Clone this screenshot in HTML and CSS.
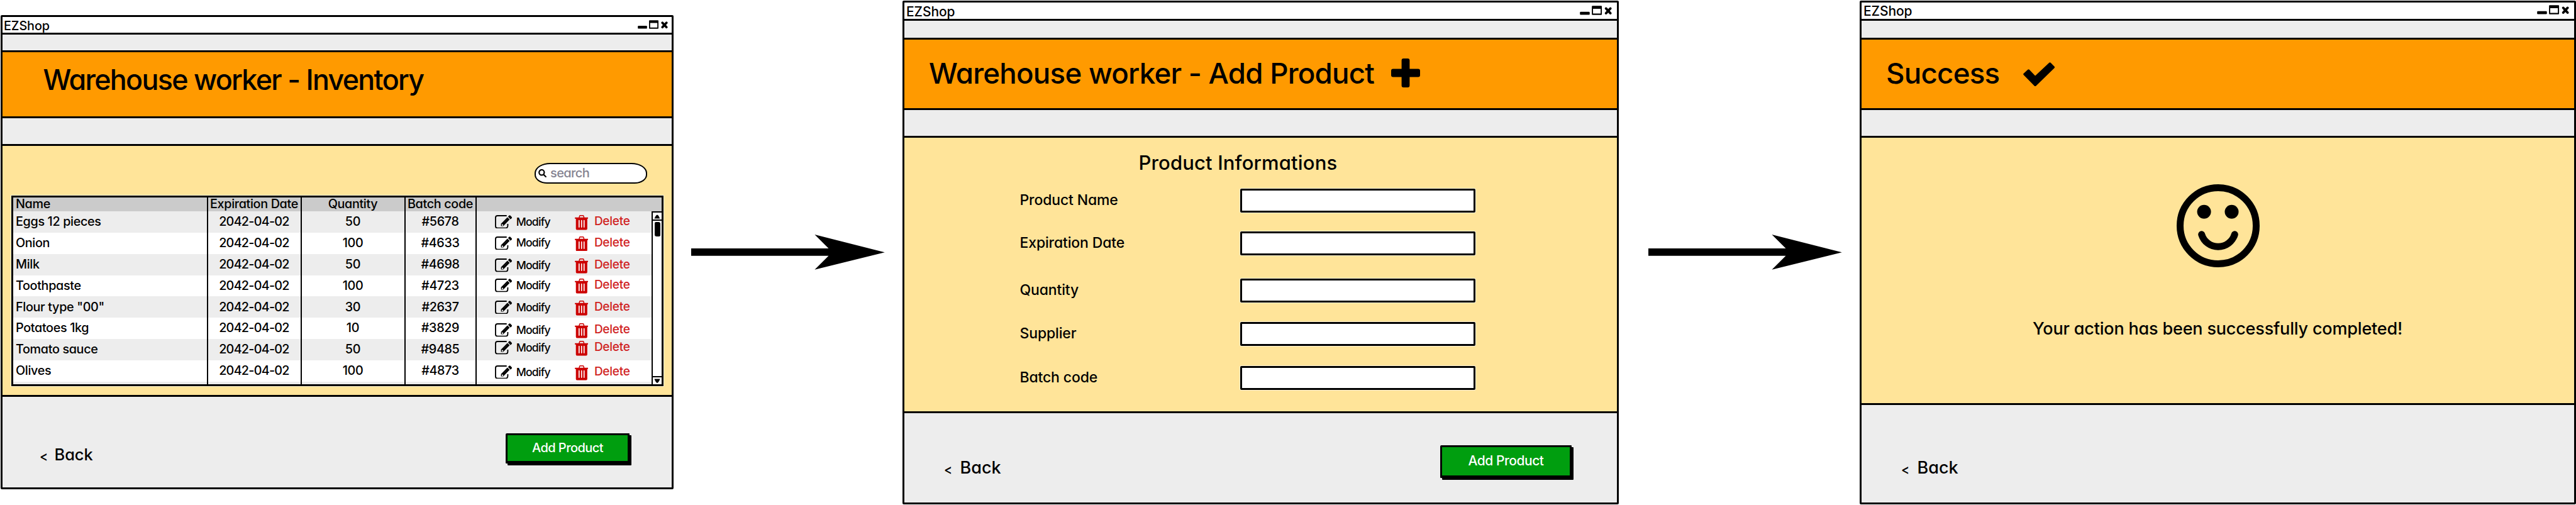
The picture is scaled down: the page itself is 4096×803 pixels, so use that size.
FILE: index.html
```html
<!DOCTYPE html>
<html lang="en">
<head>
<meta charset="utf-8">
<title>EZShop</title>
<link rel="stylesheet" href="styles.css">
</head>
<body>
<svg class="sprite" xmlns="http://www.w3.org/2000/svg">
  <symbol id="controls" viewBox="0 0 48 14">
    <rect x="0.2" y="9" width="14.6" height="4.6" rx="1.2"/>
    <path fill-rule="evenodd" d="M19 .2h13a1 1 0 0 1 1 1v11.600a1 1 0 0 1-1 1h-13a1 1 0 0 1-1-1v-11.600a1 1 0 0 1 1-1zM19.800 4.600v7.200h11.400v-7.200z"/>
    <path d="M39.300 4.200l6.400 7M45.700 4.200l-6.400 7" fill="none" stroke="#000" stroke-width="3.700" stroke-linecap="round"/>
  </symbol>
  <symbol id="edit" viewBox="0 0 144 114">
    <path d="M99 5H22Q5 5 5 22V92Q5 109 22 109H90Q108 109 108 90V74" fill="none" stroke="#000" stroke-width="10"/>
    <path d="M51 72L105 19L124 37L70 92H51z"/>
    <path d="M110 13L119 4Q125 -1 131 5L140 14Q147 21 141 26L131 35z"/>
    <path d="M58 80l5-6 3 6 6 3-6 5-7 2z" fill="#fff"/>
    <path d="M77 62l26-26" stroke="#777" stroke-width="2"/>
  </symbol>
  <symbol id="trash" viewBox="0 0 114 126">
    <path d="M36 24L41 6Q42 4 45 4H69Q72 4 73 6L78 24" fill="none" stroke="#c00" stroke-width="8"/>
    <rect x="0" y="20" width="114" height="11" rx="3" fill="#c00"/>
    <path d="M9 26H105V114Q105 126 94 126H20Q9 126 9 114z" fill="#c00"/>
    <path d="M36 45V101M57 45V101M78 45V101" stroke="#fff" stroke-width="9" stroke-linecap="round"/>
  </symbol>
  <symbol id="arrow" viewBox="0 0 308 56">
    <path d="M0 22H218.500L196.400 0L307.800 28.200L196.400 55.800L218.500 33.800H0z"/>
  </symbol>
</svg>

<main class="flow">
  <section class="window window-inventory">
    <div class="titlebar"><span class="app">EZShop</span><svg class="controls"><use href="#controls"/></svg></div>
    <div class="toolbar"></div>
    <header class="header"><h1 class="title">Warehouse worker - Inventory</h1></header>
    <div class="strip"></div>
    <div class="content">
      <div class="search">
        <svg class="search-icon" viewBox="0 0 13 13"><ellipse cx="5.300" cy="5.200" rx="4.100" ry="4.200"/><path d="M8.300 8.500L11.800 12"/></svg>
        <span class="search-text">search</span>
      </div>
      <div class="table">
        <div class="row head"><div class="cell name">Name</div><div class="cell">Expiration Date</div><div class="cell">Quantity</div><div class="cell">Batch code</div><div class="cell"></div></div>
        <div class="table-body">
          <div class="rows">
            <div class="row"><div class="cell name">Eggs 12 pieces</div><div class="cell date">2042-04-02</div><div class="cell">50</div><div class="cell">#5678</div><div class="actions"><svg class="edit"><use href="#edit"/></svg><span class="modify">Modify</span><svg class="trash"><use href="#trash"/></svg><span class="delete">Delete</span></div></div>
            <div class="row"><div class="cell name">Onion</div><div class="cell date">2042-04-02</div><div class="cell">100</div><div class="cell">#4633</div><div class="actions"><svg class="edit"><use href="#edit"/></svg><span class="modify">Modify</span><svg class="trash"><use href="#trash"/></svg><span class="delete">Delete</span></div></div>
            <div class="row"><div class="cell name">Milk</div><div class="cell date">2042-04-02</div><div class="cell">50</div><div class="cell">#4698</div><div class="actions"><svg class="edit"><use href="#edit"/></svg><span class="modify">Modify</span><svg class="trash"><use href="#trash"/></svg><span class="delete">Delete</span></div></div>
            <div class="row"><div class="cell name">Toothpaste</div><div class="cell date">2042-04-02</div><div class="cell">100</div><div class="cell">#4723</div><div class="actions"><svg class="edit"><use href="#edit"/></svg><span class="modify">Modify</span><svg class="trash"><use href="#trash"/></svg><span class="delete">Delete</span></div></div>
            <div class="row"><div class="cell name">Flour type "00"</div><div class="cell date">2042-04-02</div><div class="cell">30</div><div class="cell">#2637</div><div class="actions"><svg class="edit"><use href="#edit"/></svg><span class="modify">Modify</span><svg class="trash"><use href="#trash"/></svg><span class="delete">Delete</span></div></div>
            <div class="row"><div class="cell name">Potatoes 1kg</div><div class="cell date">2042-04-02</div><div class="cell">10</div><div class="cell">#3829</div><div class="actions"><svg class="edit"><use href="#edit"/></svg><span class="modify">Modify</span><svg class="trash"><use href="#trash"/></svg><span class="delete">Delete</span></div></div>
            <div class="row"><div class="cell name">Tomato sauce</div><div class="cell date">2042-04-02</div><div class="cell">50</div><div class="cell">#9485</div><div class="actions"><svg class="edit"><use href="#edit"/></svg><span class="modify">Modify</span><svg class="trash"><use href="#trash"/></svg><span class="delete">Delete</span></div></div>
            <div class="row"><div class="cell name">Olives</div><div class="cell date">2042-04-02</div><div class="cell">100</div><div class="cell">#4873</div><div class="actions"><svg class="edit"><use href="#edit"/></svg><span class="modify">Modify</span><svg class="trash"><use href="#trash"/></svg><span class="delete">Delete</span></div></div>
            <div class="row rest"><div class="cell"></div><div class="cell"></div><div class="cell"></div><div class="cell"></div><div></div></div>
          </div>
          <div class="scrollbar">
            <svg class="scroll-up" viewBox="0 0 14 11"><path d="M2.500 9.500Q5 3.500 7 3.500T11.200 9.500z"/></svg>
            <div class="thumb"></div>
            <svg class="scroll-down" viewBox="0 0 14 11"><path d="M2.500 2.500H11.500Q9 9 7 9T2.500 2.500z"/></svg>
          </div>
        </div>
      </div>
    </div>
    <footer class="footer"><a class="back"><span class="lt">&lt;</span><span class="back-text">Back</span></a><button class="button">Add Product</button></footer>
  </section>

  <svg class="arrow arrow-first"><use href="#arrow"/></svg>

  <section class="window window-form">
    <div class="titlebar"><span class="app">EZShop</span><svg class="controls"><use href="#controls"/></svg></div>
    <div class="toolbar"></div>
    <header class="header"><h1 class="title">Warehouse worker - Add Product</h1><svg class="plus" viewBox="0 0 46 46"><rect x="0" y="16.600" width="46" height="12.800" rx="3"/><rect x="16.600" y="0" width="12.800" height="46" rx="3"/></svg></header>
    <div class="strip"></div>
    <div class="content">
      <h2 class="subtitle">Product Informations</h2>
      <form class="form">
        <label class="field"><span class="label">Product Name</span><input class="input"></label>
        <label class="field"><span class="label">Expiration Date</span><input class="input"></label>
        <label class="field"><span class="label">Quantity</span><input class="input"></label>
        <label class="field"><span class="label">Supplier</span><input class="input"></label>
        <label class="field"><span class="label">Batch code</span><input class="input"></label>
      </form>
    </div>
    <footer class="footer"><a class="back"><span class="lt">&lt;</span><span class="back-text">Back</span></a><button class="button">Add Product</button></footer>
  </section>

  <svg class="arrow arrow-second"><use href="#arrow"/></svg>

  <section class="window window-success">
    <div class="titlebar"><span class="app">EZShop</span><svg class="controls"><use href="#controls"/></svg></div>
    <div class="toolbar"></div>
    <header class="header"><h1 class="title">Success</h1><svg class="check" viewBox="0 0 50.300 38.400"><path d="M2 19L8.500 13L19 24L42.500 2L48.300 8L19 36.400z"/></svg></header>
    <div class="strip"></div>
    <div class="content">
      <svg class="smiley" viewBox="0 0 132 132"><circle class="line" cx="66" cy="66" r="60.500"/><circle cx="43.600" cy="43.700" r="11"/><circle cx="87.500" cy="43.700" r="11"/><path class="line" d="M39.700 79.800A27.500 27.500 0 0 0 92.300 79.800"/></svg>
      <p class="message">Your action has been successfully completed!</p>
    </div>
    <footer class="footer"><a class="back"><span class="lt">&lt;</span><span class="back-text">Back</span></a></footer>
  </section>
</main>
</body>
</html>
```
FILE: styles.css
```css
* { box-sizing: border-box; }

body {
  margin: 0;
  background: #fff;
  color: #000;
  font-family: Inter, "Noto Sans", sans-serif;
  font-weight: 500;
  font-feature-settings: "cv11";
}

h1, h2, p { margin: 0; }

.sprite { display: block; width: 0; height: 0; }

.flow {
  display: flex;
  align-items: flex-start;
  width: 4096px;
  height: 803px;
  overflow: hidden;
}

/* Window frame */
.window {
  display: flex;
  flex-direction: column;
  flex: none;
  width: 1139px;
  margin-top: 1px;
  border: 3px solid #000;
  border-radius: 2px;
  background: #ededed;
}
.titlebar {
  display: flex;
  align-items: center;
  justify-content: space-between;
  height: 29px;
  padding: 3px 8px 0 3px;
  border-bottom: 3px solid #000;
  background: #fff;
}
.app { font-size: 21px; line-height: 24px; letter-spacing: -0.1px; }
.controls { width: 51px; height: 15px; margin-top: -5px; }
.toolbar { height: 30px; border-bottom: 3px solid #000; }
.header {
  display: flex;
  align-items: center;
  height: 112px;
  padding-bottom: 2px;
  padding-left: 39px;
  border-bottom: 3px solid #000;
  background: #ff9a00;
}
.title {
  font-size: 45.700px;
  font-weight: 550;
  line-height: 54px;
  letter-spacing: -0.770px;
  white-space: nowrap;
}
.strip { height: 44px; border-bottom: 3px solid #000; }
.content { height: 438px; border-bottom: 3px solid #000; background: #ffe499; }
.footer {
  display: flex;
  align-items: flex-start;
  justify-content: space-between;
  height: 142px;
}
.back {
  display: flex;
  margin-top: 72px;
  padding-left: 63px;
  font-size: 27px;
  line-height: 30px;
}
.lt {
  width: 25.500px;
  padding-top: 2px;
  font-size: 22px;
  transform: scaleX(0.900);
  transform-origin: 0 50%;
}
.button {
  width: 209px;
  height: 52px;
  margin: 50.500px 72px 0 0;
  padding: 0 0 2px;
  border: 3px solid #000;
  border-bottom-width: 4px;
  border-radius: 2px 1px 1px;
  background: #009e0f;
  box-shadow: 3px 3px 0 #000;
  color: #fff;
  font: inherit;
  font-size: 21px;
  letter-spacing: -0.450px;
}

/* Inventory window */
.window-inventory { width: 1070px; margin: 24px 0 0 1px; }
.window-inventory .titlebar { height: 28px; padding: 3px 6px 0 2px; }
.window-inventory .app { font-size: 19.800px; }
.window-inventory .controls { width: 48px; height: 14px; margin-top: -5px; }
.window-inventory .toolbar { height: 28px; }
.window-inventory .header { height: 105px; padding: 0 0 15px 64.500px; }
.window-inventory .title { font-size: 44.800px; letter-spacing: -1.700px; }
.window-inventory .content { height: 399px; padding: 27px 13px 0 14px; }
.window-inventory .footer { height: 144px; }
.window-inventory .back { margin-top: 77px; padding-left: 59px; font-size: 25.400px; }
.window-inventory .lt { width: 23.500px; }
.window-inventory .button {
  width: 197px;
  height: 48px;
  margin: 58px 67px 0 0;
  font-size: 20px;
  letter-spacing: -0.550px;
}

.search {
  display: flex;
  align-items: center;
  width: 179px;
  height: 33px;
  margin-left: 832px;
  padding-left: 4px;
  border: 2.500px solid #000;
  border-radius: 25px 25px 20px 20px / 16px 16px 14px 14px;
  background: #fff;
}
.search-icon {
  width: 13px;
  height: 13px;
  fill: none;
  stroke: #000;
  stroke-width: 2.200px;
  stroke-linecap: round;
}
.search-text {
  margin-left: 6px;
  padding-bottom: 2px;
  color: #858391;
  font-size: 20px;
  letter-spacing: -0.600px;
}

.table {
  width: 1037px;
  height: 303px;
  margin-top: 19px;
  border: 3px solid #000;
  background: #fff;
  box-shadow: 0 0 0 1px rgba(255, 255, 255, 0.6);
  font-size: 19.800px;
  letter-spacing: -0.350px;
}
.table-body { display: flex; height: 275px; }
.rows { width: 1015px; height: 275px; overflow: hidden; }
.row {
  display: grid;
  grid-template-columns: 309.500px 149px 165px 113px 1fr;
  height: 33.850px;
}
.row:nth-child(odd) { background: #ededed; }
.row.head { height: 22px; background: #cbcbcb; }
.row.rest { height: 4.200px; }
.cell {
  display: flex;
  align-items: center;
  justify-content: center;
  padding-bottom: 1.500px;
  border-right: 2px solid #000;
  line-height: 20px;
  white-space: nowrap;
}
.head .cell { padding-bottom: 3px; }
.head .cell:last-child { border-right: 0; }
.cell.name { justify-content: flex-start; padding-left: 4px; }
.cell.date { letter-spacing: -0.750px; }

.actions { display: flex; align-items: flex-start; padding: 5.800px 0 0 29px; line-height: 20px; }
.row:nth-child(3) .actions { padding-top: 7.500px; }
.row:nth-child(5) .actions { padding-top: 6.500px; }
.row:nth-child(6) .actions { padding-top: 8.800px; }
.row:nth-child(7) .actions { padding-top: 3.200px; }
.row:nth-child(8) .actions { padding-top: 7.800px; }
.edit { width: 27.200px; height: 21.600px; }
.modify {
  width: 93px;
  margin: 0.800px 0 0 7px;
  font-size: 17.600px;
  letter-spacing: -0.750px;
}
.trash { width: 21.500px; height: 23.800px; }
.delete {
  margin-left: 9.700px;
  color: #d02222;
  font-size: 19px;
  letter-spacing: -0.250px;
}

.scrollbar {
  display: flex;
  flex-direction: column;
  width: 16px;
  height: 275px;
  border: solid #000;
  border-width: 2px 0 0 2px;
  background: #fff;
}
.scroll-up { width: 14px; height: 13px; border-bottom: 2px solid #000; }
.thumb { width: 9px; height: 23px; margin: 2px 0 0 2.500px; border-radius: 2px 3px; background: #000; }
.scroll-down { width: 14px; height: 13px; margin-top: auto; border-top: 2px solid #000; }

/* Arrows between windows */
.arrow { flex: none; width: 308px; height: 56px; margin-top: 373.300px; }
.arrow-first { margin-left: 28px; margin-right: 28px; }
.arrow-second { margin-left: 47px; margin-right: 28px; }

/* Form window */
.plus { width: 46px; height: 46px; margin: 0 0 2px 27px; }
.subtitle {
  margin: 19.600px 0 21.400px 372.500px;
  font-size: 31px;
  font-weight: 500;
  line-height: 40px;
  letter-spacing: 0.150px;
}
.form { display: grid; grid-template-rows: 68px 75px 69px 70px 38px; padding-left: 183.500px; }
.field { display: flex; align-items: center; height: 38px; }
.label {
  width: 350.500px;
  padding-bottom: 2.500px;
  font-size: 23px;
  letter-spacing: -0.150px;
}
.input {
  width: 374px;
  height: 38px;
  border: 3px solid #000;
  border-radius: 2px;
  background: #fff;
  box-shadow: 0 0 0 1px rgba(255, 255, 255, 0.6);
}

/* Success window */
.window-success .titlebar { padding-top: 1px; }
.window-success .controls { margin-top: -4px; }
.window-success .content { height: 425px; }
.window-success .footer { height: 155px; }
.window-success .back { margin-top: 85px; }
.check {
  width: 50.300px;
  height: 38.400px;
  margin: 3px 0 0 38px;
  stroke: #000;
  stroke-width: 3.500px;
  stroke-linejoin: round;
}
.smiley { display: block; width: 132px; height: 132px; margin: 74px 0 0 501px; }
.smiley .line { fill: none; stroke: #000; stroke-width: 11px; stroke-linecap: round; }
.message {
  margin: 77.600px 0 0 272px;
  font-size: 27px;
  line-height: 40px;
  letter-spacing: -0.180px;
}
```
